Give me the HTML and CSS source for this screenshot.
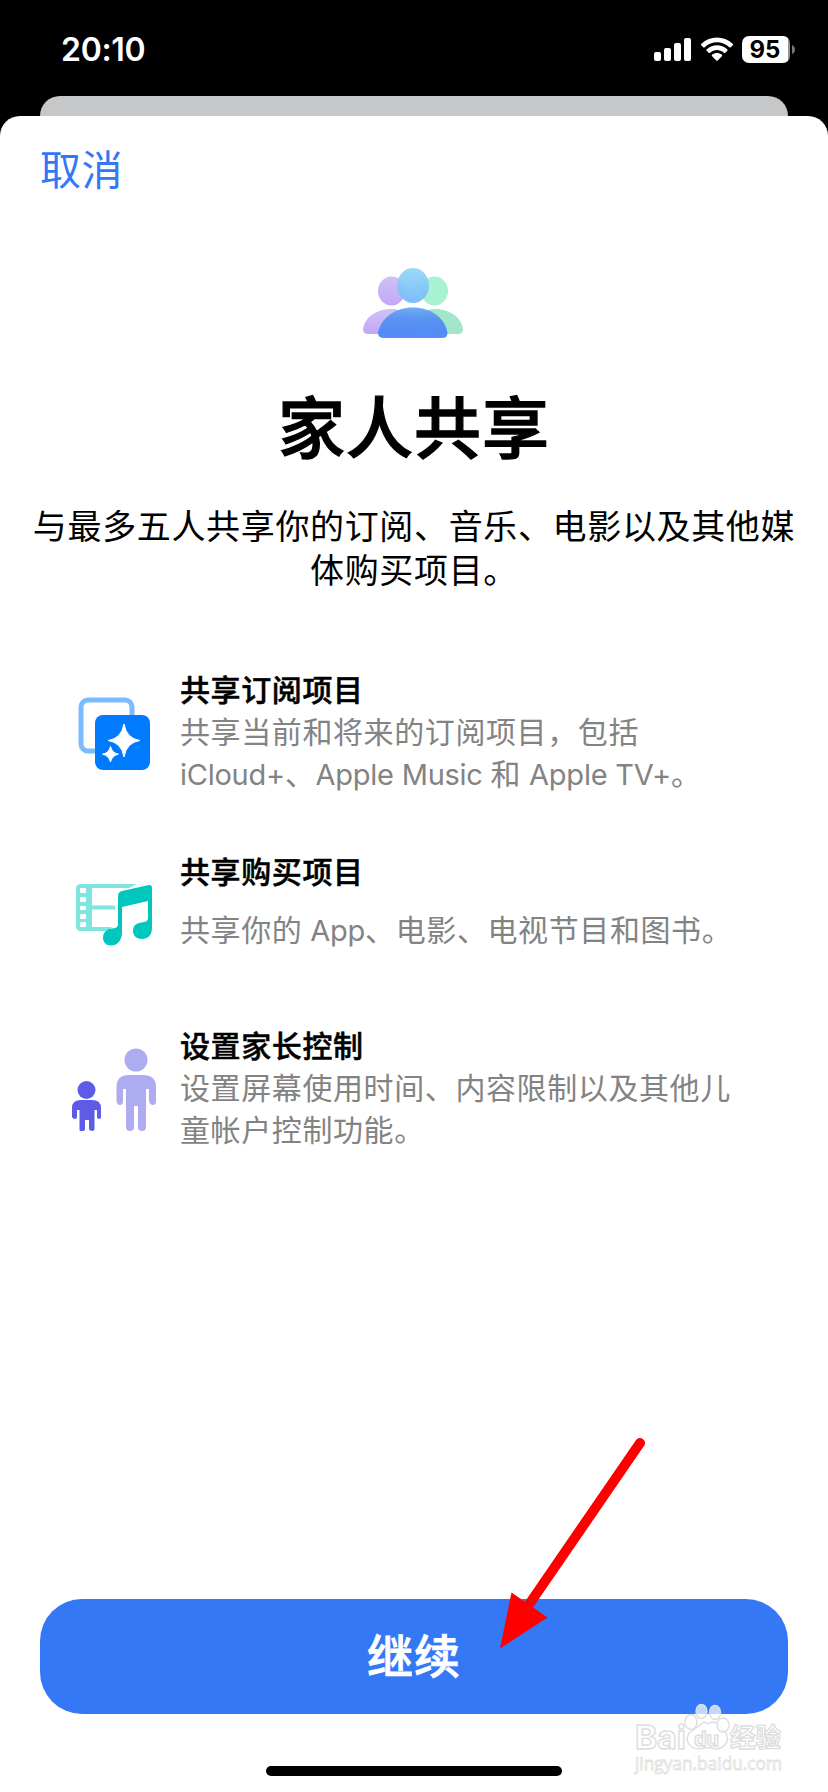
FILE: index.html
```html
<!DOCTYPE html>
<html lang="zh-CN">
<head>
<meta charset="utf-8">
<title>家人共享</title>
<link rel="stylesheet" href="styles.css">
</head>
<body>
<div class="screen">
  <header class="status">
    <span class="time">20:10</span>
    <div class="indicators">
      <svg class="signal" width="38" height="24" viewBox="0 0 38 24" fill="#fff">
        <rect x="0" y="14" width="7" height="9" rx="2"/><rect x="10" y="10" width="7" height="13" rx="2"/><rect x="20" y="5" width="7" height="18" rx="2"/><rect x="30" y="0" width="7" height="23" rx="2"/>
      </svg>
      <svg class="wifi" width="34" height="24" viewBox="0 0 34 24" fill="#fff">
        <path d="M1.2 8.2Q.5 7.400 1.300 6.700C10.300-1.500 23.700-1.500 32.700 6.700Q33.500 7.400 32.800 8.200L30.800 10.200Q30.100 10.900 29.300 10.200C22.200 3.700 11.800 3.700 4.700 10.200Q3.900 10.900 3.200 10.200Z"/>
        <path d="M6.700 13.700Q6 13 6.800 12.200C12.500 6.900 21.500 6.900 27.200 12.200Q28 13 27.300 13.700L25.300 15.700Q24.600 16.300 23.800 15.700C20 12.200 14 12.200 10.200 15.700Q9.400 16.300 8.700 15.700Z"/>
        <path d="M12.100 19.200Q11.300 18.400 12.300 17.600C15 15.400 19 15.400 21.700 17.600Q22.700 18.400 21.900 19.200L17.700 23.400Q17 24.100 16.300 23.400Z"/>
      </svg>
      <div class="battery"><span class="charge">95</span></div>
      <svg class="nub" width="3" height="9" viewBox="0 0 3 9"><path d="M0 0Q3 1.500 3 4.500T0 9Z" fill="#777"/></svg>
    </div>
  </header>
  <div class="back-card"></div>
  <main class="sheet">
    <a class="cancel">取消</a>
    <svg class="hero" width="102" height="72" viewBox="0 0 102 72">
      <defs>
        <linearGradient id="purple" x1="0" y1="0" x2="0" y2="1"><stop offset="0" stop-color="#cfc2f6"/><stop offset="1" stop-color="#c2a6f8"/></linearGradient>
        <linearGradient id="green" x1="0" y1="0" x2="1" y2="1"><stop offset="0" stop-color="#9aecc8"/><stop offset="1" stop-color="#a5e3cc"/></linearGradient>
        <linearGradient id="sky" x1="0" y1="0" x2="0" y2="1"><stop offset="0" stop-color="#93d8f8"/><stop offset="1" stop-color="#74b8f8"/></linearGradient>
        <linearGradient id="blue" x1="0" y1="0" x2="0" y2="1"><stop offset="0" stop-color="#68a9f2"/><stop offset=".4" stop-color="#568ff2"/><stop offset="1" stop-color="#4c87f6"/></linearGradient>
      </defs>
      <ellipse cx="29.500" cy="24" rx="13.500" ry="14.500" fill="url(#purple)"/>
      <ellipse cx="72.500" cy="24" rx="13.500" ry="14.500" fill="#a8f2d2"/>
      <path d="M6 67Q1 67 1 62C3 49 16 42 29 42C42 42 51 49 54 67Z" fill="url(#purple)"/>
      <path d="M96 67Q101 67 101 62C99 49 86 42 73 42C60 42 51 49 48 67Z" fill="url(#green)"/>
      <ellipse cx="51" cy="18.500" rx="16" ry="17.500" fill="url(#sky)" opacity=".94"/>
      <path d="M22 71Q16 71 16 66C19 50 34 40.500 51 40.500S83 50 85.500 66Q85.500 71 80 71Z" fill="url(#blue)" opacity=".96"/>
    </svg>
    <h1 class="title">家人共享</h1>
    <p class="intro">与最多五人共享你的订阅、音乐、电影以及其他媒<br>体购买项目。</p>
    <ul class="features">
      <li class="feature subscriptions">
        <svg class="icon" width="88" height="90" viewBox="0 0 88 90">
          <rect x="9" y="10" width="51" height="51" rx="7" fill="none" stroke="#7abcff" stroke-width="5"/>
          <rect x="23" y="25" width="55" height="55" rx="8" fill="#007aff"/>
          <path d="M52 34Q54.500 48.500 68 50.500Q54.500 52.500 52 67Q49.500 52.500 36 50.500Q49.500 48.500 52 34ZM38.500 56.500Q40 63 46.500 64.200Q40 65.500 38.500 72Q37 65.500 30.500 64.200Q37 63 38.500 56.500Z" fill="#fff" stroke="#fff" stroke-width="1"/>
        </svg>
        <div class="copy"><h2 class="name">共享订阅项目</h2><p class="detail">共享当前和将来的订阅项目，包括<br><span class="en">iCloud+</span>、<span class="en">Apple Music </span>和<span class="en"> Apple TV+</span>。</p></div>
      </li>
      <li class="feature purchases">
        <svg class="icon" width="88" height="90" viewBox="0 0 88 90">
          <path fill="#7fe5df" fill-rule="evenodd" d="M9 14H65L57 18H20V35.500H43V39.500H20V57H40L36 61H9Q4 61 4 56V19Q4 14 9 14ZM9 18h4q1 0 1 1v3q0 1-1 1h-4q-1 0-1-1v-3q0-1 1-1ZM9 27h4q1 0 1 1v3q0 1-1 1h-4q-1 0-1-1v-3q0-1 1-1ZM9 36h4q1 0 1 1v2q0 1-1 1h-4q-1 0-1-1v-2q0-1 1-1ZM9 44h4q1 0 1 1v3q0 1-1 1h-4q-1 0-1-1v-3q0-1 1-1ZM9 52h4q1 0 1 1v3q0 1-1 1h-4q-1 0-1-1v-3q0-1 1-1Z"/>
          <path fill="#00c7be" d="M50 21L77 15Q80 15 80 18V58C80 65 76 69 70 69C65 69 61 66 61 61C61 55 65 53 70 52.500L74 51.500Q76 51 76 48V31L50 37V62C50 70 46 75.500 39 75.500C34 75.500 31 72 31 68C31 62 35 59 40 58.500L43 58Q46 57 46 54V26Q46 22 50 21Z"/>
        </svg>
        <div class="copy"><h2 class="name">共享购买项目</h2><p class="detail">共享你的<span class="en"> App</span>、电影、电视节目和图书。</p></div>
      </li>
      <li class="feature parental">
        <svg class="icon" width="88" height="90" viewBox="0 0 88 90">
          <g fill="#5e5ce6"><circle cx="14.500" cy="44" r="9"/><path d="M9 54H20Q29 54 29 62V71Q29 73 27 73T25 71V64L22.500 64V83Q22.500 85 20 85T17 83V74H13V83Q13 85 10 85T7.500 83V64L5 64V71Q5 73 3 73T0 71V62Q0 54 9 54Z"/></g>
          <g fill="#aeacf1"><circle cx="64" cy="14" r="11.500"/><path d="M57 29H71Q84 29 84 41V55Q84 59 81 59T77 55V43L74 43V81Q74 85 70 85T66 81V60H62V81Q62 85 58 85T54 81V43L51 43V55Q51 59 48 59T44.500 55V41Q44.500 29 57 29Z"/></g>
        </svg>
        <div class="copy"><h2 class="name">设置家长控制</h2><p class="detail">设置屏幕使用时间、内容限制以及其他儿<br>童帐户控制功能。</p></div>
      </li>
    </ul>
    <button class="continue">继续</button>
    <div class="home-bar"></div>
  </main>
  <svg class="watermark" width="160" height="90" viewBox="0 0 160 90">
    <g class="outline">
      <text x="2" y="52" class="latin" textLength="51" lengthAdjust="spacingAndGlyphs">Bai</text>
      <path d="M75 27C82 21 87 29 93 36C98 46 89 54 78 51Q75 50 71 51C58 54 51 46 56 36Q63 31 67 28Q71 23 75 27Z"/>
      <ellipse cx="58" cy="25" rx="6" ry="7.500"/><ellipse cx="68.500" cy="14.500" rx="5.500" ry="7"/><ellipse cx="82" cy="15.500" rx="5.500" ry="7"/><ellipse cx="90" cy="28" rx="6" ry="7"/>
      <text x="61" y="49" class="du" textLength="25" lengthAdjust="spacingAndGlyphs">du</text>
      <text x="97" y="50" class="hanzi" textLength="51" lengthAdjust="spacingAndGlyphs">经验</text>
      <text x="2" y="73" class="site" textLength="147" lengthAdjust="spacingAndGlyphs">jingyan.baidu.com</text>
    </g>
  </svg>
  <svg class="pointer" width="160" height="220" viewBox="0 0 160 220" fill="red">
    <path d="M150 13L38 176" stroke="red" stroke-width="10" stroke-linecap="round"/>
    <path d="M10 218.500L21.500 162.500L57.500 187.500Z"/>
  </svg>
</div>
</body>
</html>
```
FILE: styles.css
```css
* { box-sizing: border-box; margin: 0; padding: 0; }
body { background: #000; font-family: Inter, "Noto Sans CJK SC", sans-serif; }
.screen { position: relative; width: 828px; height: 1792px; overflow: hidden; background: #000; display: flex; flex-direction: column; }
.status { height: 96px; flex: none; display: flex; justify-content: space-between; padding: 30px 33px 0 61px; color: #fff; }
.time { font-size: 32px; line-height: 40px; font-weight: 600; letter-spacing: -.3px; }
.indicators { display: flex; align-items: flex-start; }
.signal { margin: 8px 8px 0 0; }
.wifi { margin: 7px 8px 0 0; }
.battery { width: 48px; height: 27px; margin-top: 6px; border-radius: 7px; background: linear-gradient(90deg, #fff 46px, #929292 46px); display: flex; justify-content: center; }
.charge { color: #000; font-size: 24px; line-height: 27px; font-weight: 700; padding-right: 2px; }
.nub { margin: 15px 0 0 2px; }
.back-card { flex: none; width: 748px; height: 40px; margin: 0 auto -20px; border-radius: 20px 20px 0 0; background: #c6c7c9; }
.sheet { position: relative; flex: 1; background: #fff; border-radius: 20px 20px 0 0; display: flex; flex-direction: column; align-items: center; }
.cancel { align-self: flex-start; margin: 25px 0 0 40px; height: 60px; line-height: 58px; font-size: 41px; letter-spacing: .5px; color: #3478f6; }
.hero { margin-top: 66px; margin-right: 2px; }
.title { margin-top: 40px; height: 100px; line-height: 100px; font-size: 67px; font-weight: 500; letter-spacing: 1px; white-space: nowrap; -webkit-text-stroke: 1.300px #000; }
.intro { margin-top: 26px; font-size: 34px; line-height: 44px; letter-spacing: .65px; text-align: center; white-space: nowrap; }
.features { align-self: stretch; list-style: none; padding: 77px 0 0 72px; }
.feature { display: flex; height: 182px; gap: 20px; }
.icon { flex: none; }
.name { font-size: 30px; line-height: 41px; font-weight: 500; letter-spacing: .6px; white-space: nowrap; -webkit-text-stroke: .5px #000; }
.detail { font-size: 30px; line-height: 42px; letter-spacing: .6px; color: #838383; white-space: nowrap; }
.en { font-size: 29px; letter-spacing: -.25px; }
.subscriptions .icon { margin-top: 20px; }
.purchases .icon { margin-top: 18px; }
.purchases .detail { padding-top: 16px; }
.purchases { height: 174px; }
.parental .icon { margin-top: 20px; }
.continue { position: relative; width: 748px; height: 115px; margin-top: auto; border: 0; border-radius: 42px; background: #3478f6; color: #fff; font: 500 46px/115px Inter, "Noto Sans CJK SC", sans-serif; letter-spacing: 1px; -webkit-text-stroke: .8px #fff; }
.home-bar { width: 296px; height: 10px; margin: 52px 0 16px; border-radius: 5px; background: #000; }
.watermark { position: absolute; left: 633px; top: 1697px; }
.outline { fill: rgba(255,255,255,.7); stroke: #dedede; stroke-width: 1.400px; }
.latin { font: 700 33px Inter, sans-serif; }
.du { font: 700 20px Inter, sans-serif; }
.hanzi { font: 700 26px "Noto Sans CJK SC", sans-serif; }
.site { font: 400 18px "Open Sans", sans-serif; stroke-width: .8px; }
.pointer { position: absolute; left: 490px; top: 1430px; }
```
